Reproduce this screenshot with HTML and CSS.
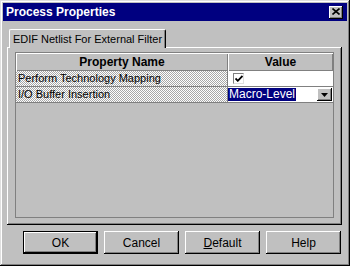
FILE: index.html
```html
<!DOCTYPE html>
<html lang="en">
<head>
  <meta charset="UTF-8" />
  <title>Process Properties</title>
  <link rel="stylesheet" href="styles.css">
</head>
<body>
  <div class="window">
    <div class="titlebar">
      <span class="title">Process Properties</span>
      <span class="close">
        <svg width="8" height="7" viewBox="0 0 8 7"><path d="M0.5 0.5 L7.5 6.5 M7.5 0.5 L0.5 6.5" stroke="#000" stroke-width="1.6"/></svg>
      </span>
    </div>

    <div class="content">
      <div class="tabs">
        <div class="tab">EDIF Netlist For External Filter</div>
      </div>
      <div class="panel">
        <div class="grid">
          <table class="props">
            <tr>
              <th class="col-name">Property Name</th>
              <th class="col-value">Value</th>
            </tr>
            <tr>
              <td class="name">Perform Technology Mapping</td>
              <td class="value"><span class="check"><svg width="8" height="7" viewBox="0 0 8 7"><path d="M0.5 3.5 L2.8 5.8 L7.5 1" stroke="#000" stroke-width="1.8" fill="none"/></svg></span></td>
            </tr>
            <tr>
              <td class="name">I/O Buffer Insertion</td>
              <td class="value">
                <div class="select">
                  <span class="selected">Macro-Level</span>
                  <span class="drop"><svg width="7" height="4" viewBox="0 0 7 4"><path d="M0 0 H7 L3.5 4 Z" fill="#000"/></svg></span>
                </div>
              </td>
            </tr>
          </table>
        </div>
      </div>

      <div class="buttons">
        <button class="btn default-btn">OK</button>
        <button class="btn">Cancel</button>
        <button class="btn"><u>D</u>efault</button>
        <button class="btn">Help</button>
      </div>
    </div>
  </div>
</body>
</html>
```

FILE: styles.css
```css
body {
  margin: 0;
  background: #c0c0c0;
  font-family: "Liberation Sans", Arial, sans-serif;
  font-size: 12px;
  color: #000;
}

.window {
  width: 350px;
  height: 266px;
  box-sizing: border-box;
  padding: 3px;
  background: #c0c0c0;
  box-shadow: inset -1px -1px #000, inset 1px 1px #dfdfdf,
              inset -2px -2px #808080, inset 2px 2px #fff;
  display: flex;
  flex-direction: column;
}

.titlebar {
  height: 18px;
  background: #000080;
  color: #fff;
  display: flex;
  align-items: center;
  justify-content: space-between;
  padding: 0 4px 0 3px;
}

.title {
  font-weight: bold;
  font-size: 12px;
}

.close {
  width: 14px;
  height: 13px;
  box-sizing: border-box;
  background: #c0c0c0;
  box-shadow: inset -1px -1px #000, inset 1px 1px #fff, inset -2px -2px #808080;
  display: flex;
  align-items: center;
  justify-content: center;
  padding-bottom: 1px;
}

.content {
  flex: 1;
  display: flex;
  flex-direction: column;
  padding: 8px 5px 0 4px;
}

.tabs {
  display: flex;
  padding-left: 2px;
}

.tab {
  position: relative;
  z-index: 1;
  height: 19px;
  width: 157px;
  box-sizing: border-box;
  margin-bottom: -1px;
  padding-top: 3px;
  text-align: center;
  white-space: nowrap;
  font-size: 11px;
  background: #c0c0c0;
  border-top: 1px solid #fff;
  border-left: 1px solid #fff;
  border-right: 1px solid #000;
  border-radius: 2px 2px 0 0;
  box-shadow: inset -1px 0 #808080;
}

.panel {
  height: 178px;
  box-sizing: border-box;
  padding: 5px 8px 7px 8px;
  box-shadow: inset -1px -1px #000, inset 1px 1px #fff, inset -2px -2px #808080;
}

.grid {
  height: 100%;
  box-sizing: border-box;
  border: 1px solid #808080;
  background: #c0c0c0;
}

.props {
  width: 100%;
  border-collapse: separate;
  border-spacing: 0;
  font-size: 11px;
}

.props th {
  height: 18px;
  padding: 0;
  font-size: 12px;
  font-weight: bold;
  background: #c0c0c0;
  box-shadow: inset 1px 1px #fff, inset -1px -1px #808080;
}

.col-name {
  width: 212px;
}

.props td {
  height: 15px;
  line-height: 15px;
  padding: 0;
  border-bottom: 1px solid #808080;
}

.name {
  padding-left: 2px !important;
  border-right: 1px solid #808080;
  background-color: #fff;
  background-image: repeating-conic-gradient(#a8a8a8 0 25%, #fff 0 50%);
  background-size: 2px 2px;
  white-space: nowrap;
}

.value {
  background: #fff;
}

.check {
  display: flex;
  align-items: center;
  justify-content: center;
  width: 11px;
  height: 11px;
  box-sizing: border-box;
  margin-left: 5px;
  border-top: 1px solid #808080;
  border-left: 1px solid #808080;
  border-right: 1px solid #dfdfdf;
  border-bottom: 1px solid #dfdfdf;
  background: #fff;
}

.select {
  display: flex;
  align-items: center;
  justify-content: space-between;
  height: 15px;
}

.selected {
  background: #000080;
  color: #fff;
  padding: 0 1px;
  line-height: 13px;
  font-size: 12px;
}

.drop {
  width: 15px;
  height: 13px;
  box-sizing: border-box;
  margin-right: 1px;
  display: flex;
  align-items: center;
  justify-content: center;
  background: #c0c0c0;
  box-shadow: inset -1px -1px #000, inset 1px 1px #fff, inset -2px -2px #808080;
}

.buttons {
  display: flex;
  justify-content: flex-end;
  gap: 6px;
  margin-top: 6px;
  padding-right: 1px;
}

.btn {
  width: 75px;
  height: 23px;
  box-sizing: border-box;
  border: none;
  background: #c0c0c0;
  font-family: "Liberation Sans", Arial, sans-serif;
  font-size: 12px;
  color: #000;
  padding: 0;
  box-shadow: inset -1px -1px #000, inset 1px 1px #fff, inset -2px -2px #808080;
}

.default-btn {
  border: 1px solid #000;
}
```
